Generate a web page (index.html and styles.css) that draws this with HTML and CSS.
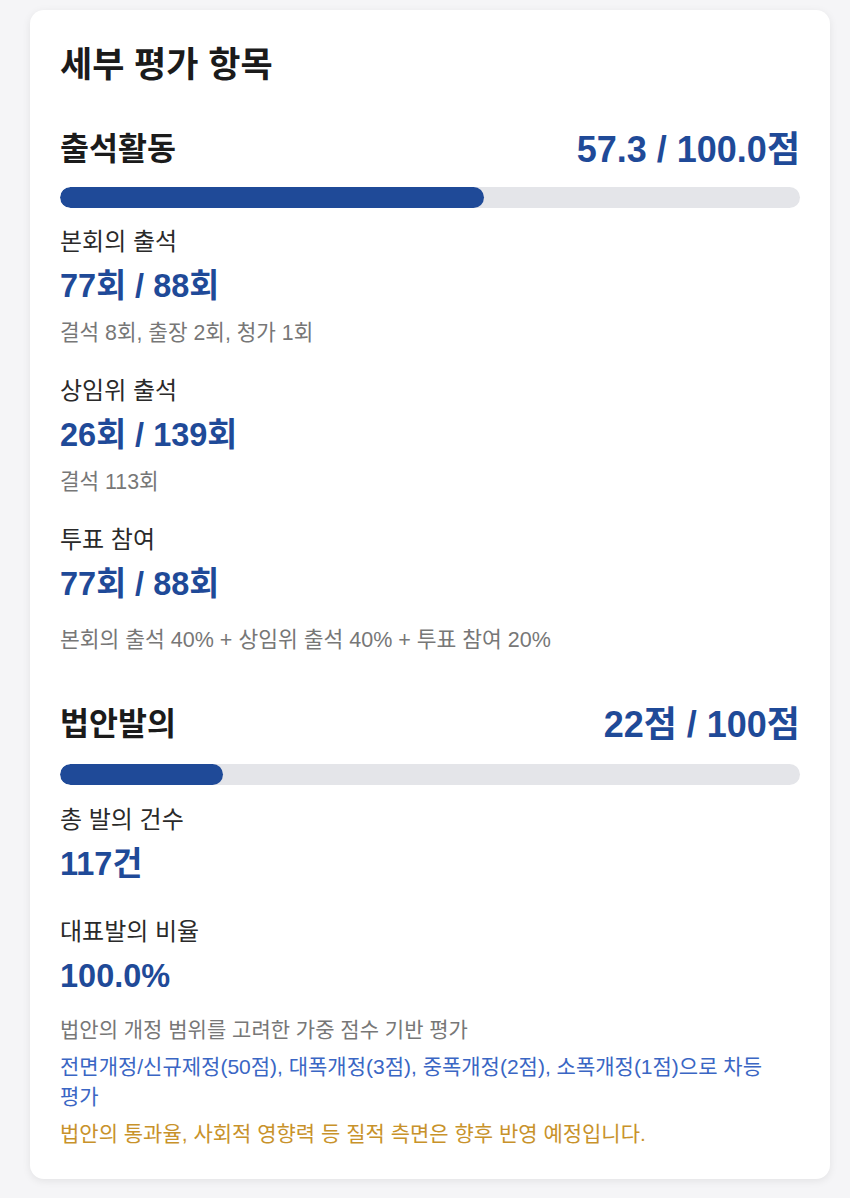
FILE: index.html
```html
<!DOCTYPE html>
<html lang="ko">
<head>
  <meta charset="UTF-8" />
  <meta name="viewport" content="width=device-width, initial-scale=1.0" />
  <title>세부 평가 항목</title>
  <link rel="stylesheet" href="styles.css">
</head>
<body>
  <div class="card">
    <h2 class="card-title">세부 평가 항목</h2>

    <!-- 출석활동 -->
    <section class="section">
      <div class="section-head">
        <h3>출석활동</h3>
        <span class="score">57.3 / 100.0점</span>
      </div>
      <div class="bar"><div class="bar-fill" style="width: 57.3%"></div></div>

      <div class="item">
        <div class="item-label">본회의 출석</div>
        <div class="item-value">77회 / 88회</div>
        <div class="item-sub">결석 8회, 출장 2회, 청가 1회</div>
      </div>
      <div class="item">
        <div class="item-label">상임위 출석</div>
        <div class="item-value">26회 / 139회</div>
        <div class="item-sub">결석 113회</div>
      </div>
      <div class="item">
        <div class="item-label">투표 참여</div>
        <div class="item-value">77회 / 88회</div>
      </div>
      <p class="note">본회의 출석 40% + 상임위 출석 40% + 투표 참여 20%</p>
    </section>

    <!-- 법안발의 -->
    <section class="section section-bills">
      <div class="section-head">
        <h3>법안발의</h3>
        <span class="score">22점 / 100점</span>
      </div>
      <div class="bar"><div class="bar-fill" style="width: 22%"></div></div>

      <div class="item">
        <div class="item-label">총 발의 건수</div>
        <div class="item-value">117건</div>
      </div>
      <div class="item">
        <div class="item-label">대표발의 비율</div>
        <div class="item-value">100.0%</div>
      </div>
      <div class="notes">
        <p class="note">법안의 개정 범위를 고려한 가중 점수 기반 평가</p>
        <p class="note note-blue">전면개정/신규제정(50점), 대폭개정(3점), 중폭개정(2점), 소폭개정(1점)으로 차등 평가</p>
        <p class="note note-gold">법안의 통과율, 사회적 영향력 등 질적 측면은 향후 반영 예정입니다.</p>
      </div>
    </section>
  </div>
</body>
</html>
```

FILE: styles.css
```css
body {
  margin: 0;
  padding: 10px 20px 18px 30px;
  background: #f5f5f7;
  font-family: "Liberation Sans", "Noto Sans CJK KR", sans-serif;
  color: #222;
  word-break: keep-all;
}
.card {
  background: #fff;
  border-radius: 14px;
  box-shadow: 0 2px 8px rgba(0,0,0,0.08);
  padding: 35px 30px 30px;
}
.card-title {
  margin: 0;
  font-size: 35px;
  line-height: 40px;
  font-weight: bold;
  color: #1b1b1b;
}
.section {
  margin-top: 41px;
}
.section + .section {
  margin-top: 47px;
}
.section-head {
  display: flex;
  justify-content: space-between;
  align-items: center;
  height: 40px;
}
.section-head h3 {
  margin: 0;
  font-size: 31.5px;
  font-weight: bold;
  color: #1b1b1b;
}
.score {
  font-size: 36px;
  font-weight: bold;
  color: #1f4a98;
}
.bar {
  margin-top: 21px;
  height: 21px;
  border-radius: 11px;
  background: #e4e5e9;
  overflow: hidden;
}
.section-bills .bar {
  margin-top: 23px;
}
.bar-fill {
  height: 100%;
  border-radius: 11px;
  background: #1f4a98;
}
.item {
  margin-top: 19px;
}
.item + .item {
  margin-top: 29px;
}
.section-bills .item {
  margin-top: 20px;
}
.section-bills .item + .item {
  margin-top: 33px;
}
.item-label {
  font-size: 24px;
  line-height: 30px;
  color: #2a2a2a;
}
.item-value {
  margin-top: 9px;
  font-size: 32.5px;
  line-height: 40px;
  font-weight: bold;
  color: #1f4a98;
}
.item-sub {
  margin-top: 13px;
  font-size: 21.3px;
  line-height: 28px;
  color: #777;
}
.note {
  margin: 22px 0 0;
  font-size: 21.5px;
  line-height: 28px;
  color: #777;
}
.notes {
  margin-top: 19px;
}
.notes .note {
  margin-top: 7px;
  font-size: 21px;
  line-height: 30px;
}
.notes .note:first-child {
  margin-top: 0;
}
.note-blue {
  color: #3a66c4;
}
.note-gold {
  color: #c8922a;
}
```
